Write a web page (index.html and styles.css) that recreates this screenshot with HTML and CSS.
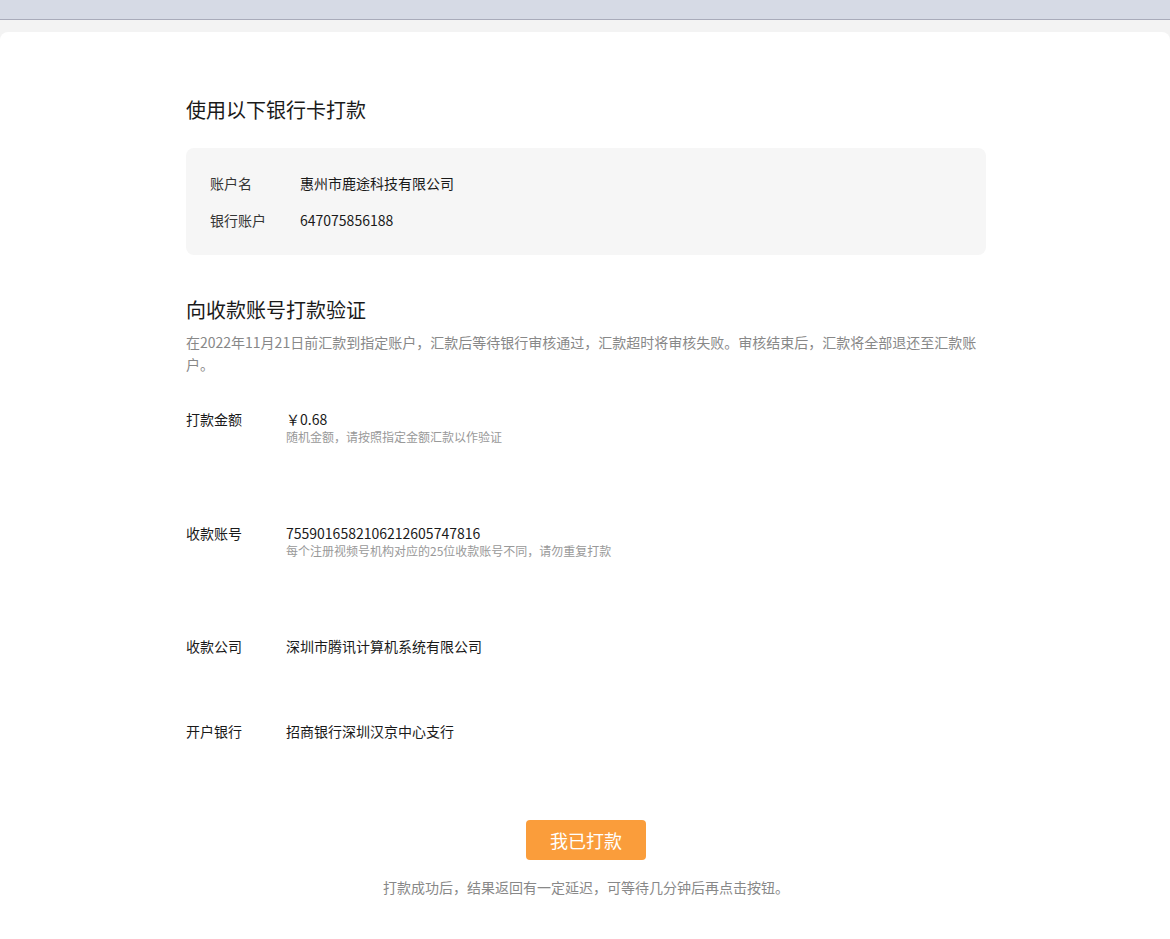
FILE: index.html
```html
<!DOCTYPE html>
<html lang="zh-CN">
<head>
<meta charset="utf-8">
<title>打款验证</title>
<link rel="stylesheet" href="styles.css">
</head>
<body>
<div class="topbar"></div>
<main class="card">
  <div class="content">
    <h2 class="title">使用以下银行卡打款</h2>
    <div class="bank-box">
      <div class="bank-row"><span class="bank-label">账户名</span><span class="bank-value">惠州市鹿途科技有限公司</span></div>
      <div class="bank-row"><span class="bank-label">银行账户</span><span class="bank-value">647075856188</span></div>
    </div>

    <h2 class="title title-second">向收款账号打款验证</h2>
    <p class="desc">在2022年11月21日前汇款到指定账户，汇款后等待银行审核通过，汇款超时将审核失败。审核结束后，汇款将全部退还至汇款账户。</p>

    <div class="pay-list">
      <div class="pay-row has-hint first">
        <div class="pay-label">打款金额</div>
        <div class="pay-body">
          <div class="pay-value">￥0.68</div>
          <div class="pay-hint">随机金额，请按照指定金额汇款以作验证</div>
        </div>
      </div>
      <div class="pay-row has-hint">
        <div class="pay-label">收款账号</div>
        <div class="pay-body">
          <div class="pay-value">7559016582106212605747816</div>
          <div class="pay-hint">每个注册视频号机构对应的25位收款账号不同，请勿重复打款</div>
        </div>
      </div>
      <div class="pay-row">
        <div class="pay-label">收款公司</div>
        <div class="pay-body"><div class="pay-value">深圳市腾讯计算机系统有限公司</div></div>
      </div>
      <div class="pay-row last">
        <div class="pay-label">开户银行</div>
        <div class="pay-body"><div class="pay-value">招商银行深圳汉京中心支行</div></div>
      </div>
    </div>

    <div class="actions">
      <button class="btn" type="button">我已打款</button>
      <p class="note">打款成功后，结果返回有一定延迟，可等待几分钟后再点击按钮。</p>
    </div>
  </div>
</main>
</body>
</html>
```

FILE: styles.css
```css
* { box-sizing: border-box; }
html, body { margin: 0; padding: 0; }
body {
  background: #f3f3f3;
  font-family: "Noto Sans CJK SC", "Noto Sans", sans-serif;
  color: #353535;
  font-size: 14px;
  min-height: 939px;
}
.topbar {
  height: 20px;
  background: #d6dae5;
  border-bottom: 1px solid #a9abba;
}
.card {
  margin-top: 12px;
  background: #fff;
  border-radius: 8px 8px 0 0;
  min-height: 907px;
  padding-top: 64px;
}
.content {
  width: 800px;
  margin-left: 186px;
}
.title {
  margin: 0;
  font-size: 20px;
  line-height: 28px;
  font-weight: 400;
  color: #1a1a1a;
}
.bank-box {
  margin-top: 24px;
  background: #f6f6f6;
  border-radius: 8px;
  padding: 25px 24px 25px 24px;
  display: flex;
  flex-direction: column;
  gap: 17px;
}
.bank-row {
  display: flex;
  line-height: 20px;
}
.bank-label {
  width: 90px;
  font-size: 14px;
  color: #353535;
}
.bank-value {
  font-size: 14px;
  color: #1a1a1a;
}
.title-second { margin-top: 41px; }
.desc {
  margin: 7px 0 0;
  font-size: 14px;
  line-height: 22px;
  color: #888;
}
.pay-list {
  margin-top: 35px;
  display: flex;
  flex-direction: column;
}
.pay-row {
  display: flex;
  align-items: flex-start;
  margin-bottom: 67px;
}
.pay-row.has-hint { margin-bottom: 77px; }
.pay-row.has-hint.first { margin-bottom: 78px; }
.pay-row.last { margin-bottom: 0; }
.pay-label {
  width: 100px;
  font-size: 14px;
  line-height: 18px;
  color: #1a1a1a;
}
.pay-value {
  font-size: 14px;
  line-height: 18px;
  color: #1a1a1a;
}
.pay-hint {
  font-size: 12px;
  line-height: 18px;
  color: #999;
}
.actions {
  margin-top: 80px;
  display: flex;
  flex-direction: column;
  align-items: center;
}
.btn {
  width: 120px;
  height: 40px;
  border: none;
  border-radius: 4px;
  background: #fa9d3b;
  color: #fff;
  font-family: inherit;
  font-size: 18px;
  padding: 0;
}
.note {
  margin: 17px 0 0;
  font-size: 14px;
  line-height: 20px;
  color: #888;
}
```
